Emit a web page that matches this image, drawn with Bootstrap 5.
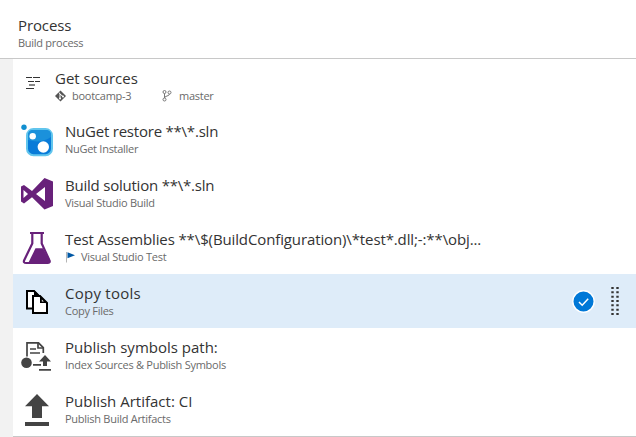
<!DOCTYPE html>
<html lang="en">
<head>
<meta charset="utf-8">
<title>Build process</title>
<link href="https://cdn.jsdelivr.net/npm/bootstrap@5.3.0/dist/css/bootstrap.min.css" rel="stylesheet">
<style>
body{font-family:"Open Sans","Noto Sans",sans-serif;background:#fff;color:#333;height:437px;overflow:hidden}
.head-area{height:59px;border-bottom:1px solid #c8c8c8;padding:15px 0 0 18px}
.side-strip{width:13px;background:#f2f2f2}
.step-row{height:54px}
.step-row.first{height:53px}
.step-row.picked{background:#deecf9}
.step-icon{width:52px;height:54px}
.step-text{padding-top:9px}
.step-title{font-size:15px;line-height:20px;height:21px;color:#333}
.step-sub{font-size:11px;line-height:14px;height:14px;color:#6a6a6a;letter-spacing:-.27px}
.snug{letter-spacing:-.12px}
.tight{letter-spacing:-.22px}
.loose{letter-spacing:.25px}
.repo{width:90px}
.steps{border-bottom:1px solid #c8c8c8}
.row-tools{padding-right:17px;gap:16px}
</style>
<script src="https://cdn.jsdelivr.net/npm/bootstrap@5.3.0/dist/js/bootstrap.bundle.min.js"></script>
</head>
<body>
<header class="head-area text-nowrap">
<div class="step-title snug">Process</div>
<div class="step-sub">Build process</div>
</header>
<main class="d-flex">
<div class="side-strip flex-shrink-0"></div>
<div class="steps flex-grow-1 text-nowrap">
<div class="step-row first d-flex">
<svg class="flex-shrink-0" width="42" height="53" viewBox="0 0 42 53"><path d="M13 18.500h6M20 18.500h7M15 22.500h6M22 22.500h5M13 29.500h8" stroke="#333" stroke-width="1.200"/><path d="M16 26h6" stroke="#888" stroke-width="2"/></svg>
<div class="step-text"><div class="step-title">Get sources</div>
<div class="step-sub d-flex">
<div class="repo d-flex align-items-center"><svg class="me-1" width="13" height="14" viewBox="0 0 13 14"><path d="M5.500 1.500L11 7l-5.500 5.500L0 7z" fill="#555"/><path d="M4 3.500l1 1.500v5M5 5l3 2.500" fill="none" stroke="#fff"/><circle cx="5" cy="9.500" r="1" fill="#fff"/><circle cx="8" cy="7.500" r="1" fill="#fff"/></svg>bootcamp-3</div>
<div class="d-flex align-items-center ps-3"><svg class="me-1" width="14" height="14" viewBox="0 0 14 14"><g fill="none" stroke="#777"><circle cx="3.500" cy="3" r="1.500"/><circle cx="8.500" cy="3.500" r="1.500"/><circle cx="3.500" cy="10.500" r="1.500"/><path d="M3.500 4.500V9M8.500 5c0 2.500-5 1.500-5 4"/></g></svg>master</div>
</div></div>
</div>
<div class="step-row d-flex">
<svg class="step-icon flex-shrink-0" viewBox="0 0 52 54"><circle cx="11" cy="15.300" r="2.700" fill="#118fd0"/><rect x="14" y="17" width="25" height="26.200" rx="6.500" fill="#087bd8" stroke="#61c5ed" stroke-width="2"/><path d="M15 28V23q0-5 5-5h13q5 0 5 5v2q-10 7-23 3z" fill="#1b91db"/><circle cx="19.700" cy="24.300" r="3.200" fill="#fff"/><circle cx="30.300" cy="35" r="5.700" fill="#fff"/></svg>
<div class="step-text"><div class="step-title tight">NuGet restore **\*.sln</div><div class="step-sub">NuGet Installer</div></div>
</div>
<div class="step-row d-flex">
<svg class="step-icon flex-shrink-0" viewBox="0 0 52 54"><path fill="#68217a" fill-rule="evenodd" d="M8 20.500l3-1.500 8 6L31.500 12l8.500 3.500V40l-8.500 3.500L19 31.300l-8 6.200-3-2zM10.500 24v8l4.500-4zM32 21v14l-9-7z"/></svg>
<div class="step-text"><div class="step-title tight">Build solution **\*.sln</div><div class="step-sub">Visual Studio Build</div></div>
</div>
<div class="step-row d-flex">
<svg class="step-icon flex-shrink-0" viewBox="0 0 52 54"><path d="M17 13h14M19.300 13v10.500L11.300 40q-1.500 3 2 3h21q3.500 0 2-3L28.700 23.500V13" fill="none" stroke="#68217a" stroke-width="2.200"/><path d="M22.500 28.300H30l6 12q1 2.200-1.500 2.200h-19z" fill="#68217a"/></svg>
<div class="step-text"><div class="step-title snug">Test Assemblies **\$(BuildConfiguration)\*test*.dll;-:**\obj...</div><div class="step-sub d-flex align-items-center"><svg width="16" height="14" viewBox="0 0 16 14"><path d="M1.500 2v10.500" stroke="#b5b5b5"/><path d="M2.500 2.200L10 5.200 2.500 8.200z" fill="#0058a5"/></svg>Visual Studio Test</div></div>
</div>
<div class="step-row picked d-flex">
<svg class="step-icon flex-shrink-0" viewBox="0 0 52 54"><path d="M14 17h7l6 6v11.500H14z" fill="#fff" stroke="#000" stroke-width="2"/><path d="M20 22h7l7 7v10H20z" fill="#fff" stroke="#000" stroke-width="2"/><path d="M21 16v6h6zM27 21.500V29h7.500z" fill="#000"/><path d="M28.800 25.500v2h2z" fill="#fff"/></svg>
<div class="step-text"><div class="step-title loose">Copy tools</div><div class="step-sub">Copy Files</div></div>
<div class="row-tools d-flex align-items-center ms-auto">
<svg width="23" height="23" viewBox="0 0 23 23"><circle cx="11.500" cy="11.500" r="10.700" fill="#0078d7" stroke="#fff" stroke-width="1.400"/><path d="M7 12l3.200 3.200 6-6.500" fill="none" stroke="#fff" stroke-width="1.500"/></svg>
<svg width="8" height="28" viewBox="0 0 8 28"><path d="M1.500 0v28M6.500 0v28" stroke="#333" stroke-width="2.400" stroke-dasharray="2 2.330"/></svg>
</div>
</div>
<div class="step-row d-flex">
<svg class="step-icon flex-shrink-0" viewBox="0 0 52 54"><g fill="none" stroke="#444" stroke-width="1.700"><path d="M14 28.500V14.800h11.500l4.800 4.800V25"/><path d="M25 15v5h5M17 21h6M17 25h10M20 36.800h8M26 41.800h12"/></g><circle cx="13.500" cy="34.800" r="5.300" fill="#444"/><path d="M32 27l6 6.500h-4V38h-4v-4.500h-4z" fill="#444"/></svg>
<div class="step-text"><div class="step-title">Publish symbols path:</div><div class="step-sub">Index Sources &amp; Publish Symbols</div></div>
</div>
<div class="step-row d-flex">
<svg class="step-icon flex-shrink-0" viewBox="0 0 52 54"><path d="M24 12l12 12.300h-7V36H19V24.300h-7zM12 40h24v4H12z" fill="#444"/></svg>
<div class="step-text"><div class="step-title">Publish Artifact: CI</div><div class="step-sub">Publish Build Artifacts</div></div>
</div>
</div>
</main>
</body>
</html>
